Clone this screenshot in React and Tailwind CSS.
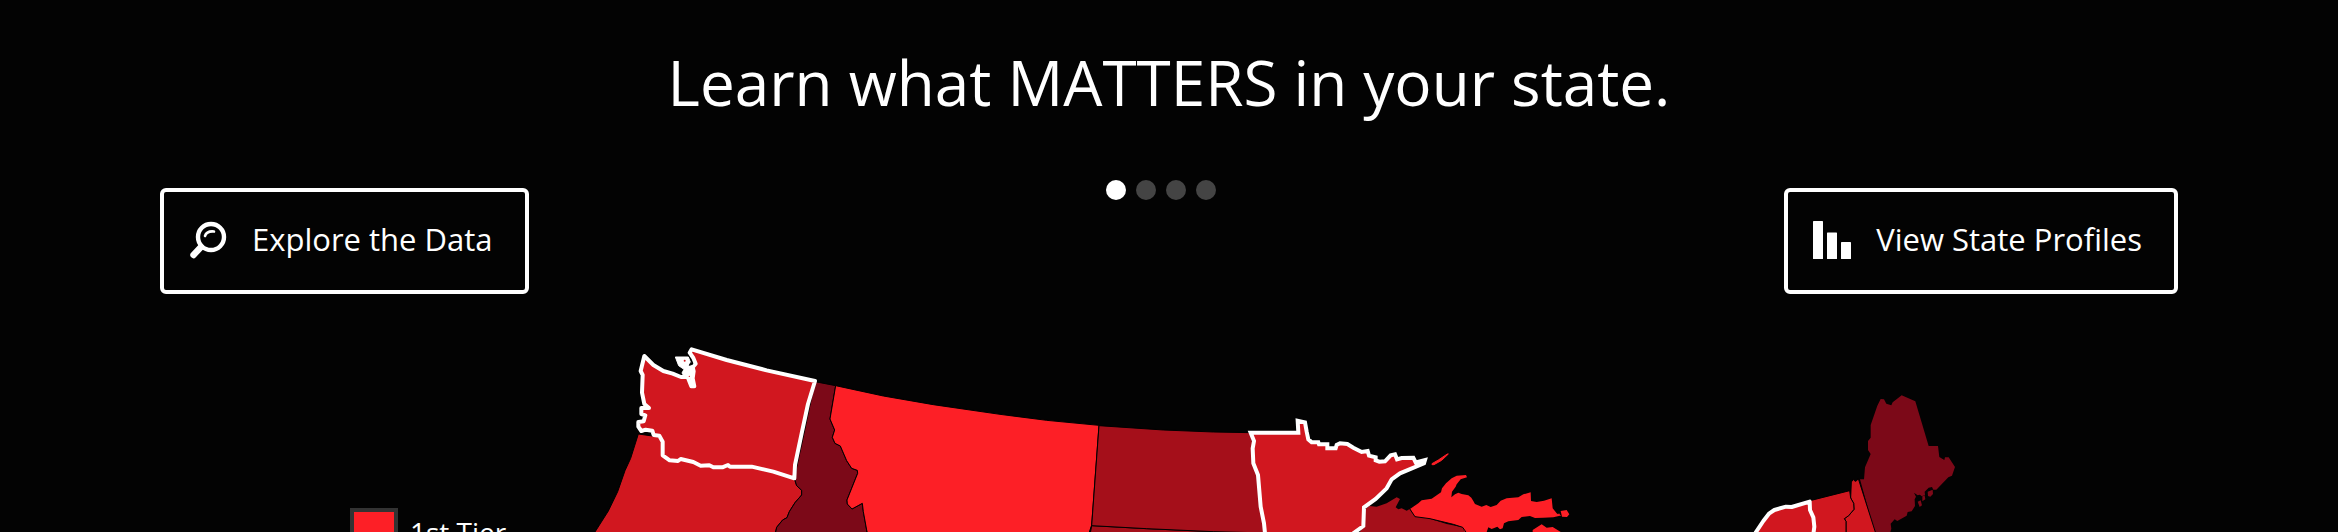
const slides = ['Slide 1', 'Slide 2', 'Slide 3', 'Slide 4']

const tiers = [
  { label: '1st Tier', swatch: 'bg-[#fd1f26]' },
]

function SearchIcon() {
  return (
    <svg className="h-10 w-10 shrink-0" viewBox="0 0 40 40" fill="none" stroke="#fff" strokeLinecap="round" aria-hidden="true">
      <circle cx="23" cy="18" r="13" strokeWidth="4.4" />
      <path d="M13 28 5.500 36" strokeWidth="6.4" />
      <path d="M17 17c1-3.200 4-5 9-4.500" strokeWidth="2.600" />
    </svg>
  )
}

function BarsIcon() {
  return (
    <svg className="h-10 w-10 shrink-0" viewBox="0 0 40 40" fill="#fff" aria-hidden="true">
      <rect x="1" y="2" width="10" height="38" rx=".6" />
      <rect x="15" y="13.500" width="10" height="26.500" rx=".6" />
      <rect x="29" y="23" width="10" height="17" rx=".6" />
    </svg>
  )
}

function ActionButton({ icon, children }) {
  return (
    <button
      type="button"
      className="flex h-[106px] items-center gap-6 rounded-md border-4 border-white pr-8 pb-1 pl-6 text-[31px] whitespace-nowrap"
    >
      {icon}
      {children}
    </button>
  )
}

function StateMap() {
  return (
    <svg
      className="block w-full"
      viewBox="560 340 1618 220"
      role="img"
      aria-label="Map of the United States by tier"
      stroke="#000"
      strokeWidth="3"
      strokeLinejoin="round"
    >
      <g transform="translate(580 330) scale(.33333)">
        <path fill="#d1171f" d="M175 312 152 385 135 422 113 485 85 543 45 606 20 650H587V606L590 592 608 570 621 563 628 545 645 518 665 495V481L650 467 643 445 515 400 300 330Z" />
        <path fill="#7c0918" d="M705 155 767 167 750 267 764 300 757 322 765 340 781 348 800 392 815 415 832 421 833 430 801 510 802 522 816 537 847 520 850 545 860 600 870 660H587V606L590 592 608 570 621 563 628 545 645 518 665 495V481L650 467 643 445Z" />
      </g>
      <g transform="translate(800 360) scale(.33333)">
        <path fill="#fd1f26" d="M107 77 250 108 400 134 600 163 740 181 897 196 875 495 868 516 860 570H215L200 510 190 455 187 430 156 447 142 432 141 420 173 340 172 331 155 325 140 302 121 258 105 250 97 232 104 210 90 177Z" />
      </g>
      <g transform="translate(1080 400) scale(.33333)">
        <path fill="#a50f1a" d="M35 377 200 386 400 395 560 399V460H20Z" />
        <path fill="#a50f1a" d="M57 77 250 90 400 96 512 98 540 240 560 399 400 395 200 386 35 377Z" />
      </g>
      <g transform="translate(1220 400) scale(.33333)">
        <path fill="#a50f1a" stroke="none" d="M448 318 470 320 500 310 530 292 540 297 527 322 535 328 545 325 560 332 569 327 585 350 625 355 680 372 728 382 745 430H400L430 378 432 330Z" />
      </g>
      <g transform="translate(1360 430) scale(.33333)" fill="#fd1f26">
        <path stroke="none" d="M150 237 175 220 185 211 215 206 243 187 246 175 258 160 275 145 290 137 318 135 321 142 302 148 290 163 287 170 276 185 274 202 285 193 295 188 305 192 325 196 334 203 340 213 345 222 365 230 379 225 392 231 410 225 422 212 440 205 475 202 490 193 512 187 513 213 530 216 552 212 575 205 578 235 590 250 600 257 580 262 550 263 525 264 510 258 485 261 475 270 445 274 432 280 428 295 420 298 412 290 395 297 385 292 375 320 370 360H335L308 292 280 283 210 266 165 260Z" />
        <path fill="none" d="M149 236 165 260 210 266 280 283 308 292 322 312" />
        <path stroke="#fd1f26" d="M216 101 235 90 262 72 265 72 245 91 222 104 216 104Z" />
        <path stroke="none" d="M602 243 620 240 628 253 621 261 606 260ZM597 250 603 258 592 256ZM518 300 545 283 560 293 578 291 625 320H518Z" />
      </g>
      <g transform="translate(1220 400) scale(.33333)">
        <path
          fill="#d1171f"
          stroke="#fff"
          strokeWidth="12"
          strokeLinejoin="miter"
          d="M92 98H235L233 62 255 67 260 95 265 118 275 127H295L297 133H322V145H347L350 135 360 130 382 132 400 143 425 156 443 153 447 167 467 172V181L478 185 495 184 512 166 525 163 531 178 545 174 580 173 587 187 615 180 612 190 540 220 515 238 500 265 467 297 432 322 430 378 400 400 350 450H140L132 370 122 320 114 225 100 190 98 145 102 123Z"
        />
      </g>
      <g transform="translate(580 330) scale(.33333)">
        <path
          fill="#d1171f"
          stroke="#fff"
          strokeWidth="12"
          d="M193 78 220 105 250 123 278 131 303 141 323 141 334 169H343L338 145 341 124 338 112 347 101 340 84 329 68 335 58 440 90 560 121 705 153 684 222 665 310 645 405 643 445 580 425 515 410H450L444 405 427 412 400 412 388 406 362 407 340 396 302 387 294 393 269 391 248 376V335L238 317 221 315 217 302 197 299 184 303 175 290V276L191 274 196 256 184 252V234L207 234 193 222 186 188 188 135 182 123Z"
        />
        <path fill="#fff" stroke="#fff" strokeWidth="3" d="M286 81H325L331 96 340 112 343 135 337 148 314 142 306 129 312 118 296 107Z" />
        <circle cx="314" cy="92" r="3" fill="#d1171f" stroke="none" />
        <circle cx="328" cy="139" r="2" fill="#d1171f" stroke="none" />
        <path d="M328 106 332 98 337 103Z" />
      </g>
      <g transform="translate(1730 380) scale(.33333)">
        <path fill="#7c0918" stroke="none" d="M390 298H402L405 262 422 222 414 210V183L422 173V135L442 77 452 57 462 58 469 71 484 76 488 67 515 46 556 64 596 198H624L628 231 643 240 645 232 656 232 675 261 666 287 655 292 619 329 610 329 606 321 596 323 584 335 585 345 575 349 570 344 563 346 552 338 558 350 554 358 555 378 545 394 533 396 530 407 502 423 494 418 482 431 484 446 474 480H440Z" />
        <path fill="#7c0918" stroke="none" d="M593 335 608 329 609 342 601 350 594 348ZM563 365 572 361 576 376 569 381ZM577 349 584 346 586 358 577 364Z" />
        <path fill="#d1171f" d="M364 306 370 298 375 304 380 302 385 296 436 456 450 500H348V424L343 416 356 407 372 388 371 370 362 354Z" />
        <path fill="#d1171f" d="M240 362 359 332 362 354 371 370 372 388 356 407 343 416 348 424V500H240Z" />
        <path fill="#d1171f" stroke="#fff" strokeWidth="12" d="M55 500 78 456 100 423 118 400 133 390 168 380 185 381 239 365 240 390 250 412 253 440 245 500Z" />
      </g>
    </svg>
  )
}

export default function App() {
  return (
    <main className="flex h-screen flex-col overflow-hidden bg-[#030303] font-['Open_Sans','Lato',sans-serif] text-white">
      <h1 className="pt-[46px] text-center text-[62px] leading-[72px]">Learn what MATTERS in your state.</h1>

      <div className="mt-[62px] grid grid-cols-[1fr_auto_1fr] px-40">
        <div className="flex pt-2">
          <ActionButton icon={<SearchIcon />}>Explore the Data</ActionButton>
        </div>
        <nav className="flex items-start gap-[10px] pr-4" aria-label="Slides">
          {slides.map((slide, i) => (
            <button
              key={slide}
              type="button"
              aria-label={slide}
              aria-current={i === 0}
              className={i === 0 ? 'size-5 rounded-full bg-white' : 'size-5 rounded-full bg-[#444]'}
            />
          ))}
        </nav>
        <div className="flex justify-end pt-2">
          <ActionButton icon={<BarsIcon />}>View State Profiles</ActionButton>
        </div>
      </div>

      <section className="mt-[46px] flex min-h-0 flex-1 items-start overflow-hidden pr-40">
        <ul className="w-[560px] shrink-0 pt-[168px] pl-[350px]">
          {tiers.map((tier) => (
            <li key={tier.label} className="flex items-center gap-3 text-[28px] leading-[48px] whitespace-nowrap">
              <span className={`size-12 border-4 border-[#333] ${tier.swatch}`} />
              {tier.label}
            </li>
          ))}
        </ul>
        <div className="min-w-0 flex-1">
          <StateMap />
        </div>
      </section>
    </main>
  )
}
